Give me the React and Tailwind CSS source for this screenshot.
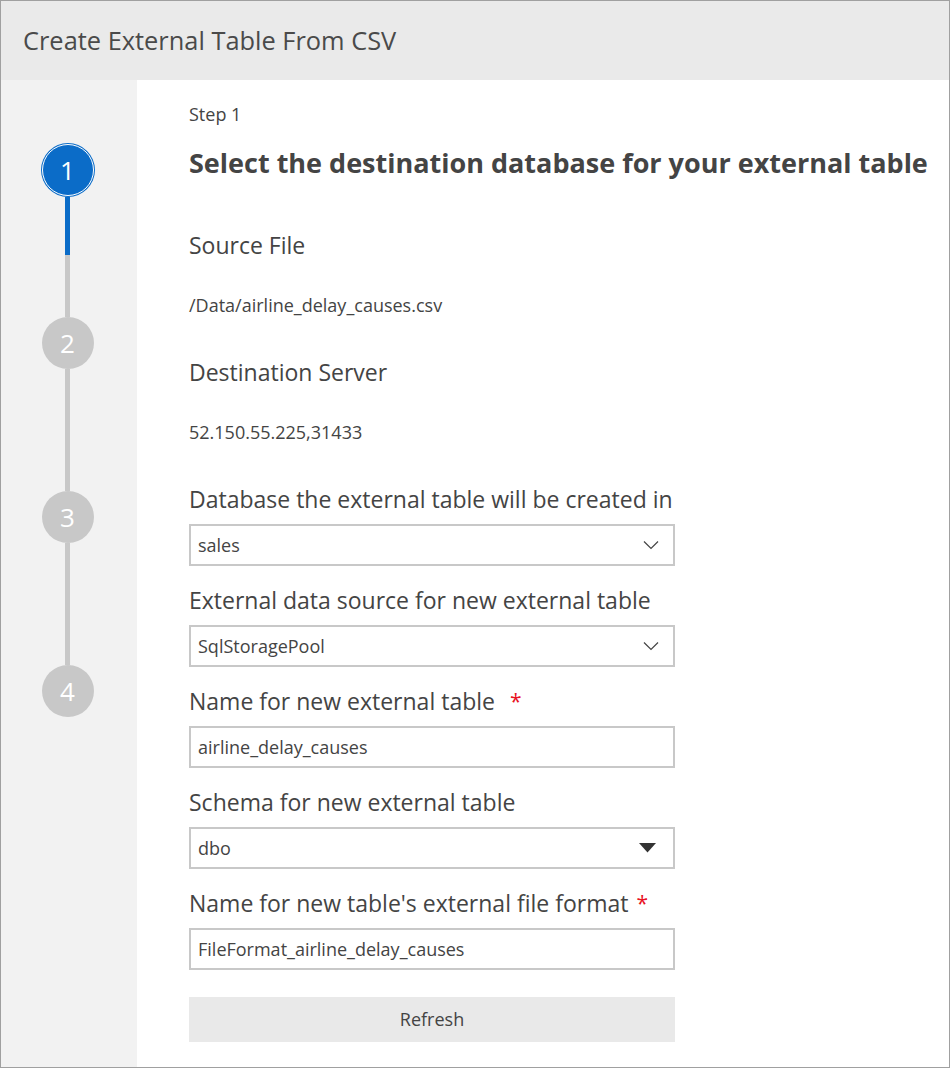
import React from 'react';

const font = { fontFamily: '"Open Sans", "Noto Sans", sans-serif' };

const Chevron = () => (
  <svg width="16" height="10" viewBox="0 0 16 10" className="shrink-0">
    <path d="M1 1.5 L8 8.5 L15 1.5" fill="none" stroke="#444" strokeWidth="1.2" />
  </svg>
);

const Caret = () => (
  <svg width="17" height="10" viewBox="0 0 17 10" className="shrink-0">
    <path d="M0 0 H17 L8.5 9.5 Z" fill="#333" />
  </svg>
);

const Field = ({ label, required, value, kind, gap }) => (
  <div className="mb-[19px]">
    <div className="flex items-center h-[30px] text-[23px] text-[#444] leading-[30px] whitespace-nowrap">
      <span>{label}</span>
      {required && <span className={`text-[#e81123] text-[21px] ${gap ? 'ml-[15px]' : 'ml-[8px]'}`}>*</span>}
    </div>
    <div className="mt-[10px] h-[42px] w-[486px] border-2 border-[#c8c8c8] bg-white flex items-center justify-between pl-[7px] text-[18px] text-[#444]">
      <span>{value}</span>
      {kind === 'chevron' && <span className="mr-[14px] flex"><Chevron /></span>}
      {kind === 'caret' && <span className="mr-[17px] flex"><Caret /></span>}
    </div>
  </div>
);

const Step = ({ n, active }) =>
  active ? (
    <div className="w-[54px] h-[54px] rounded-full bg-[#0b6cc8] p-[1px] shrink-0">
      <div className="w-full h-full rounded-full border border-white flex items-center justify-center text-white text-[26px]">
        {n}
      </div>
    </div>
  ) : (
    <div className="w-[52px] h-[52px] rounded-full bg-[#c8c8c8] flex items-center justify-center text-white text-[26px] shrink-0">
      {n}
    </div>
  );

export default function App() {
  return (
    <div style={font} className="w-[950px] h-[1068px] border border-[#a0a0a0] bg-white flex flex-col overflow-hidden">
      <div className="h-[79px] bg-[#eaeaea] flex items-center pl-[22px] shrink-0">
        <h1 className="text-[25.4px] text-[#4a4a4a]">Create External Table From CSV</h1>
      </div>
      <div className="flex flex-1">
        <div className="w-[136px] bg-[#f2f2f2] flex flex-col items-center pt-[63px] pr-[3px] shrink-0">
          <Step n="1" active />
          <div className="w-[5px] h-[58px] bg-[#0b6cc8]" />
          <div className="w-[5px] h-[62px] bg-[#c8c8c8]" />
          <Step n="2" />
          <div className="w-[5px] h-[122px] bg-[#c8c8c8]" />
          <Step n="3" />
          <div className="w-[5px] h-[122px] bg-[#c8c8c8]" />
          <Step n="4" />
        </div>
        <div className="flex-1 pl-[52px] pt-[23px] text-[#444]">
          <div className="text-[18px] leading-[22px]">Step 1</div>
          <h2 className="mt-[21px] text-[27px] leading-[34px] font-bold text-[#444] whitespace-nowrap">
            Select the destination database for your external table
          </h2>
          <div className="mt-[50px] text-[23px] leading-[30px]">Source File</div>
          <div className="mt-[34px] text-[18px] leading-[22px]">/Data/airline_delay_causes.csv</div>
          <div className="mt-[41px] text-[23px] leading-[30px]">Destination Server</div>
          <div className="mt-[34px] text-[18px] leading-[22px]">52.150.55.225,31433</div>
          <div className="mt-[41px]">
            <Field label="Database the external table will be created in" value="sales" kind="chevron" />
            <Field label="External data source for new external table" value="SqlStoragePool" kind="chevron" />
            <Field label="Name for new external table" required gap value="airline_delay_causes" />
            <Field label="Schema for new external table" value="dbo" kind="caret" />
            <Field label="Name for new table's external file format" required value="FileFormat_airline_delay_causes" />
          </div>
          <button className="mt-[8px] w-[486px] h-[45px] bg-[#e9e9e9] text-[18px] text-[#444]">Refresh</button>
        </div>
      </div>
    </div>
  );
}
